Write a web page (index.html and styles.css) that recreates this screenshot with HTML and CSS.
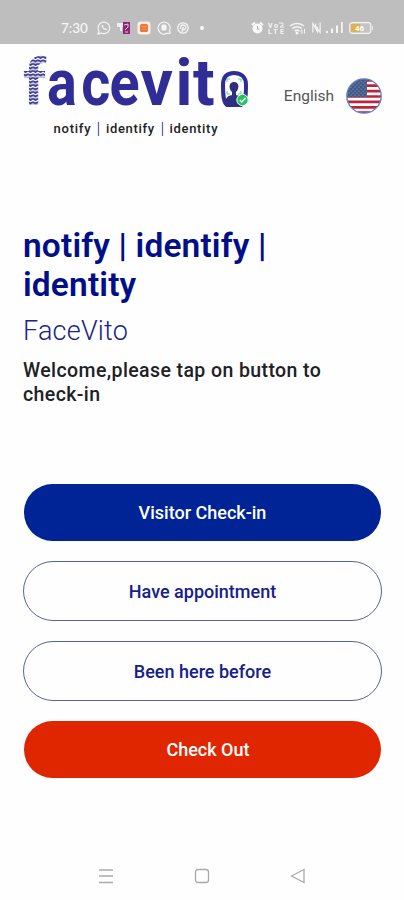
FILE: index.html
```html
<!DOCTYPE html>
<html lang="en">
<head>
  <meta charset="UTF-8" />
  <meta name="viewport" content="width=device-width, initial-scale=1.0" />
  <title>FaceVito</title>
  <link rel="stylesheet" href="styles.css">
</head>
<body>
  <div class="status-bar">
    <div class="status-left">
      <span class="time">7:30</span>
      <svg class="whatsapp" width="14" height="14" viewBox="0 0 14 14" fill="none" stroke="#f5f5f5" stroke-width="1.2">
        <path d="M1 13l.9-3.2A5.8 5.8 0 1 1 4.2 12z"/>
        <path d="M4.8 4.2c-1 1.8 2.700 5.500 4.700 4.700l.4-1-1.500-.8-.7.6L6 6l.5-.7-.6-1.300z" fill="#f5f5f5" stroke="none"/>
      </svg>
      <svg width="14" height="14" viewBox="0 0 14 14">
        <path d="M0 2h7v4H5v4H3V6H0z" fill="#eee"/>
        <path d="M6 1h7v12H6z" fill="#8c2777"/>
        <path d="M7 4l4-1v3L8 9m0 2h3" stroke="#edcbe2" fill="none"/>
      </svg>
      <svg width="14" height="14" viewBox="0 0 14 14">
        <rect x=".5" y=".5" width="13" height="13" rx="3" fill="#fff0df"/>
        <rect x="3" y="3" width="8" height="8" rx="1.500" fill="#e97843"/>
        <path d="M4 5.500h6M4 8h6" stroke="#ee9a66" stroke-width=".8"/>
      </svg>
      <svg width="14" height="14" viewBox="0 0 14 14" fill="none" stroke="#f5f5f5" stroke-width="1.200">
        <path d="M12 10.500a6 6 0 1 0-2 1.800h3v-2"/>
        <rect x="5" y="4" width="4" height="5" rx="1" fill="#f5f5f5"/>
      </svg>
      <svg width="12" height="12" viewBox="0 0 12 12" fill="none" stroke="#f5f5f5" stroke-width="1.300">
        <circle cx="6" cy="6" r="5.200"/>
        <path d="M5 10l1.300-5M4 7C2.800 4.500 4.500 3 6.200 3s3 1.500 2.300 3.300C8 8 6.500 8.200 5.800 7.200"/>
      </svg>
      <span class="more-dot"></span>
    </div>
    <div class="status-right">
      <svg width="13" height="14" viewBox="0 0 13 14">
        <circle cx="6.500" cy="7.500" r="5" fill="#fafafa"/>
        <path d="M1 4l3-2.500M12 4L9 1.500" stroke="#fafafa" stroke-width="1.700"/>
        <path d="M6.500 5v3h2" stroke="#aaa" fill="none"/>
      </svg>
      <svg class="volte" width="17" height="14" viewBox="0 0 17 14">
        <text x="0" y="6.500" textLength="10">Vo</text>
        <text x="0" y="13" textLength="16">LTE</text>
        <path d="M11 2h4v2l-3 2h4" fill="none" stroke="#f5f5f5"/>
      </svg>
      <svg width="17" height="14" viewBox="0 0 17 14" fill="none" stroke="#f5f5f5" stroke-width="1.600">
        <path d="M1 5a11 11 0 0 1 14 0M3.300 7.600a7 7 0 0 1 9.400 0M5.600 10a4 4 0 0 1 4.800 0"/>
        <circle cx="8" cy="12" r=".7" fill="#f5f5f5"/>
        <path d="M13 13V9m-1.500 1.500L13 9m2.500-1v4.500" stroke-width="1"/>
      </svg>
      <svg class="nfc" width="9" height="13" viewBox="0 0 10 13" fill="none" stroke="#f5f5f5" stroke-width="1.300">
        <path d="M1 12V2l5 9V6M4 2v3l5 7V1"/>
      </svg>
      <svg class="signal" width="17" height="13" viewBox="0 0 17 13" fill="#f5f5f5">
        <path d="M0 10h2v2H0zM5 7.500h2V12H5zM10 4.500h2V12h-2zM15 1h1.700v11H15z"/>
      </svg>
      <svg class="battery" width="25" height="12" viewBox="0 0 25 12">
        <rect x=".7" y=".7" width="21" height="10.600" rx="2.500" fill="#c5c5c5" stroke="#f2f2f2" stroke-width="1.200"/>
        <path d="M2 2h9v8H2z" fill="#dfb14c"/>
        <path d="M23 4q1.500 2 0 4" stroke="#f2f2f2" fill="none"/>
        <text x="6" y="9">46</text>
      </svg>
    </div>
  </div>

  <header class="header">
    <svg class="logo" width="228" height="88" viewBox="0 0 228 88">
      <defs>
        <pattern id="weave" width="5" height="3.500" patternUnits="userSpaceOnUse">
          <path d="M0 1l2.500 1.500L5 1" fill="none" stroke="#3a3792" stroke-width="1.900"/>
        </pattern>
      </defs>
      <text class="logo-f" x="0" y="53" fill="url(#weave)">f</text>
      <g class="logo-name">
        <text transform="translate(0 53) scale(.87 1)" x="27.6 67 99.5" y="0">ace</text>
        <text x="117.5 152.500 170" y="53">vit</text>
      </g>
      <path d="M204 53c-4-3-4-12-4-20 0-9 5-12 11-12s12 3 12 12c0 9 0 17-5 20z" fill="#fff" stroke="#302e96" stroke-width="4"/>
      <path d="M202 54c0-8 2-10 7-11v-3c-4-4-3-10 2-10s6 6 2 10v3c5 1 7 3 7 11z" fill="#302e7e"/>
      <path d="M204 30v-3h3m8 0h3v3m-14 9v3h3m8 0h3v-3" fill="none" stroke="#61d58b" stroke-width="1"/>
      <circle cx="219.500" cy="48" r="5.700" fill="#22c75b" stroke="#fff"/>
      <path d="M216.800 48l2 2 3.700-4" fill="none" stroke="#fff" stroke-width="1.500"/>
      <g class="logo-tag">
        <text x="30.500" y="80.500" textLength="37">notify</text>
        <text x="83" y="80.500" textLength="48">identify</text>
        <text x="146.500" y="80.500" textLength="48">identity</text>
      </g>
      <path d="M75.500 70v14M139.500 70v14" stroke="#6b63ad" stroke-width="1.300"/>
    </svg>
    <div class="language">
      <span>English</span>
      <svg width="36" height="36" viewBox="0 0 36 36">
        <defs>
          <clipPath id="round"><circle cx="18" cy="18" r="17"/></clipPath>
          <pattern id="stars" width="4" height="4" patternUnits="userSpaceOnUse">
            <circle cx="1" cy="1" r=".6" fill="#9daac4"/>
            <circle cx="3" cy="3" r=".6" fill="#9daac4"/>
          </pattern>
        </defs>
        <g clip-path="url(#round)">
          <path d="M0 0h36v36H0z" fill="#fff"/>
          <path d="M0 2.300h36M0 7.700h36M0 13.100h36M0 18.500h36M0 23.900h36M0 29.300h36M0 34.700h36" stroke="#bd2339" stroke-width="2.700"/>
          <path d="M0 0h21v19H0z" fill="#405985"/>
          <path d="M0 0h21v19H0z" fill="url(#stars)"/>
        </g>
        <circle cx="18" cy="18" r="17.200" fill="none" stroke="#5c80c9" stroke-width="1.300"/>
      </svg>
    </div>
  </header>

  <main class="content">
    <div class="intro">
      <h1>notify | identify | identity</h1>
      <h2>FaceVito</h2>
      <p class="welcome">Welcome,please tap on button to check-in</p>
    </div>

    <div class="buttons">
      <button class="btn btn-primary">Visitor Check-in</button>
      <button class="btn btn-outline">Have appointment</button>
      <button class="btn btn-outline">Been here before</button>
      <button class="btn btn-danger">Check Out</button>
    </div>
  </main>

  <nav class="nav-bar">
    <svg width="16" height="16" viewBox="0 0 16 16"><path d="M1 2h14M1 8h14M1 14.500h14"/></svg>
    <svg width="16" height="16" viewBox="0 0 16 16"><rect x="1.500" y="1.500" width="13" height="13" rx="2.500"/></svg>
    <svg width="16" height="16" viewBox="0 0 16 16"><path d="M1.500 8L14 1.500v13z"/></svg>
  </nav>
</body>
</html>
```

FILE: styles.css
```css
* {
  box-sizing: border-box;
}

body {
  margin: 0;
  height: 900px;
  display: flex;
  flex-direction: column;
  overflow: hidden;
  background: #fefefe;
  font-family: Roboto, sans-serif;
}

svg {
  display: block;
  flex-shrink: 0;
}

.status-bar {
  height: 44px;
  padding: 11px 30px 0 61px;
  display: flex;
  justify-content: space-between;
  background: #bebebe;
}

.status-left, .status-right {
  display: flex;
  align-items: center;
  height: 33px;
}

.status-left {
  gap: 6px;
}

.status-right {
  gap: 4px;
}

.time {
  width: 30px;
  color: #f8f8f8;
  font: 500 13.5px Lato, sans-serif;
}

.more-dot {
  width: 4px;
  height: 4px;
  margin-left: 5px;
  border-radius: 50%;
  background: #f8f8f8;
}

.volte text {
  fill: #f5f5f5;
  font: bold 7px Roboto, sans-serif;
}

.nfc {
  margin: 0 1px 0 2px;
}

.signal {
  margin-right: 2px;
}

.battery text {
  fill: #fff;
  font: bold 8px Roboto, sans-serif;
}

.header {
  height: 182px;
  padding: 8px 22px 0 23px;
  display: flex;
  align-items: flex-start;
  justify-content: space-between;
}

.logo {
  overflow: visible;
}

.logo-f {
  font: bold 65px Roboto, sans-serif;
}

.logo-name {
  fill: #302e96;
  font: bold 64px Roboto, sans-serif;
}

.logo-tag {
  fill: #222;
  font: 500 13px Roboto, sans-serif;
}

.language {
  margin-top: 26px;
  display: flex;
  align-items: center;
  gap: 12px;
  color: #555;
  font-size: 15.5px;
}

.content {
  padding: 0 22px 0 23px;
}

.intro {
  width: 320px;
}

h1, h2, p {
  margin: 0;
}

h1 {
  color: #000f87;
  font-size: 33.5px;
  font-weight: 600;
  line-height: 39px;
  letter-spacing: 0.15px;
}

h2 {
  margin-top: 10px;
  color: #1c2386;
  font-size: 27px;
  font-weight: 300;
  line-height: 34px;
  letter-spacing: 0.2px;
}

.welcome {
  margin-top: 11px;
  color: #202124;
  font-size: 19.5px;
  font-weight: 500;
  line-height: 24px;
  letter-spacing: 0.4px;
}

.buttons {
  margin-top: 77px;
  display: flex;
  flex-direction: column;
  gap: 20px;
}

.btn {
  height: 60px;
  padding: 0;
  border: 1px solid #5a619f;
  border-radius: 30px;
  font: 500 18px Roboto, sans-serif;
}

.btn-primary, .btn-danger {
  height: 57px;
  margin: 0 1px;
  border: none;
  color: #fff;
}

.btn-primary {
  background: #002395;
}

.btn-outline {
  background: #fefefe;
  color: #15208b;
}

.btn-danger {
  padding-left: 11px;
  background: #df2600;
}

.nav-bar {
  margin-top: auto;
  padding: 0 98px 16px;
  display: flex;
  justify-content: space-between;
}

.nav-bar svg {
  fill: none;
  stroke: #aaa;
  stroke-width: 1.3;
}
```
